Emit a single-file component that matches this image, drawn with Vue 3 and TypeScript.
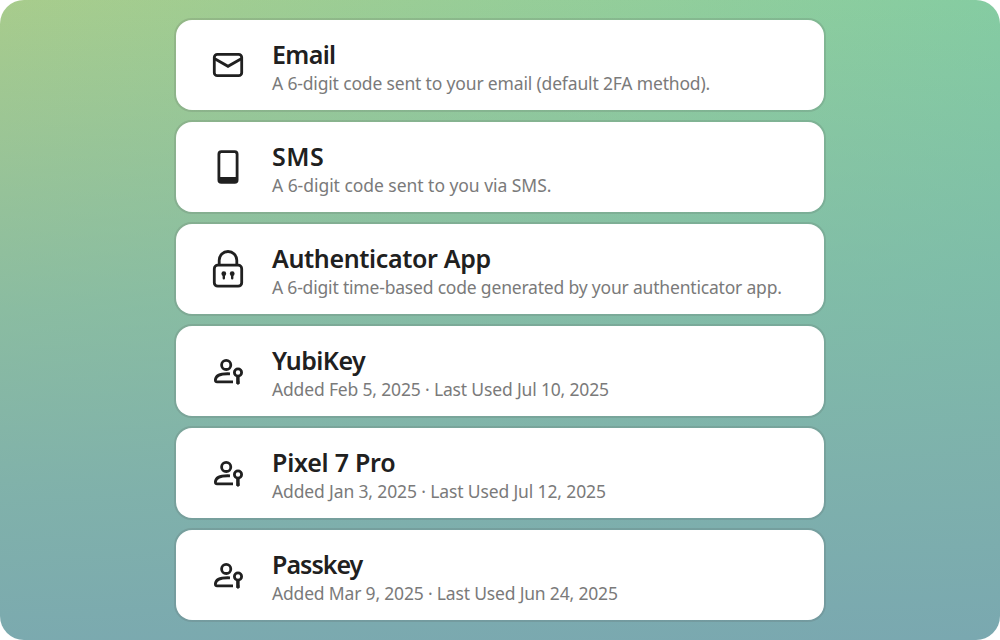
<script setup lang="ts">
type IconName = 'mail' | 'phone' | 'lock' | 'passkey'

interface Method {
  title: string
  description: string
  icon: IconName
  titleSpacing: number
  textSpacing: number
}

const methods: Method[] = [
  { title: 'Email', description: 'A 6-digit code sent to your email (default 2FA method).', icon: 'mail', titleSpacing: -0.65, textSpacing: -0.165 },
  { title: 'SMS', description: 'A 6-digit code sent to you via SMS.', icon: 'phone', titleSpacing: 0.5, textSpacing: -0.04 },
  { title: 'Authenticator App', description: 'A 6-digit time-based code generated by your authenticator app.', icon: 'lock', titleSpacing: -0.36, textSpacing: -0.19 },
  { title: 'YubiKey', description: 'Added Feb 5, 2025 · Last Used Jul 10, 2025', icon: 'passkey', titleSpacing: -0.55, textSpacing: -0.165 },
  { title: 'Pixel 7 Pro', description: 'Added Jan 3, 2025 · Last Used Jul 12, 2025', icon: 'passkey', titleSpacing: -0.25, textSpacing: -0.135 },
  { title: 'Passkey', description: 'Added Mar 9, 2025 · Last Used Jun 24, 2025', icon: 'passkey', titleSpacing: -0.98, textSpacing: -0.18 },
]
</script>

<template>
  <main class="backdrop">
    <button v-for="method in methods" :key="method.title" class="card" type="button">
      <svg class="icon" viewBox="0 0 40 40" aria-hidden="true">
        <g v-if="method.icon === 'mail'" class="line">
          <rect x="6.3" y="9.3" width="27.4" height="21.4" rx="3" />
          <path d="M6.3 13.5 20 21.3l13.7-7.8" />
        </g>
        <g v-else-if="method.icon === 'phone'">
          <path fill-rule="evenodd" d="M13.3 3.2h13.4a3.8 3.8 0 0 1 3.8 3.8v26a3.8 3.8 0 0 1-3.8 3.8H13.3A3.8 3.8 0 0 1 9.5 33V7a3.8 3.8 0 0 1 3.8-3.8Zm-.2 2.9-.8.8v23h15.4v-23l-.8-.8Z" />
        </g>
        <g v-else-if="method.icon === 'lock'">
          <g class="line">
            <rect x="6.3" y="16.2" width="27.4" height="21" rx="3.5" />
            <path d="M11.2 16v-4.7a8.8 8.8 0 0 1 17.6 0V16" />
          </g>
          <circle cx="15.8" cy="24.7" r="2.4" />
          <circle cx="24.2" cy="24.7" r="2.4" />
          <path class="line pin" d="M15.8 25v4.3M24.2 25v4.3" />
        </g>
        <g v-else class="line">
          <circle cx="18.2" cy="13.9" r="4.6" />
          <path d="M25 30.8H9.1c-1.3 0-1.8-.7-1.7-2C7.7 24.5 13.2 22.4 22 22.8" />
          <circle cx="30" cy="21.5" r="3.6" />
          <path d="M29.9 25v7.5" class="shaft" />
          <path d="M28.1 32.2 30 34l1.9-1.8-.8-1.2.8-1.2Z" class="tip" />
        </g>
      </svg>
      <span class="copy">
        <span class="title" :style="{ letterSpacing: `${method.titleSpacing}px` }">{{ method.title }}</span>
        <span class="description" :style="{ letterSpacing: `${method.textSpacing}px` }">{{ method.description }}</span>
      </span>
    </button>
  </main>
</template>

<style>
body {
  background: #fff;
}
</style>

<style scoped>
.backdrop {
  box-sizing: border-box;
  width: 1000px;
  height: 640px;
  padding: 20px 176px;
  display: flex;
  flex-direction: column;
  gap: 12px;
  border-radius: 24px;
  background:
    linear-gradient(178deg, rgba(122, 180, 172, 0) 0%, rgba(122, 179, 173, 0.64) 46%, rgba(125, 175, 173, 0.92) 73%, #7aa8b0 100%),
    linear-gradient(90deg, #a8cc8c 0%, #93cf9a 65%, #86cea1 100%);
}

.card {
  box-sizing: border-box;
  width: 648px;
  height: 90px;
  padding: 2px 32px 0;
  display: flex;
  align-items: center;
  gap: 24px;
  border: 0;
  border-radius: 16px;
  background: #fff;
  box-shadow: 0 0 0 2px rgba(80, 80, 80, 0.16);
  text-align: left;
}

.icon {
  flex: none;
  width: 40px;
  height: 40px;
  margin-bottom: 2px;
  fill: #202020;
}

.line {
  fill: none;
  stroke: #202020;
  stroke-width: 2.8;
}

.pin {
  stroke-width: 2.4;
  stroke-linecap: round;
}

.shaft {
  stroke-width: 3.5;
}

.tip {
  fill: #202020;
  stroke: none;
}

.copy {
  display: flex;
  flex-direction: column;
  white-space: nowrap;
  font-family: "Noto Sans", "Open Sans", sans-serif;
}

.title {
  font-size: 25px;
  line-height: 34px;
  font-weight: 600;
  color: #202020;
}

.description {
  font-size: 17.5px;
  line-height: 24px;
  color: #7a7a7a;
}
</style>
